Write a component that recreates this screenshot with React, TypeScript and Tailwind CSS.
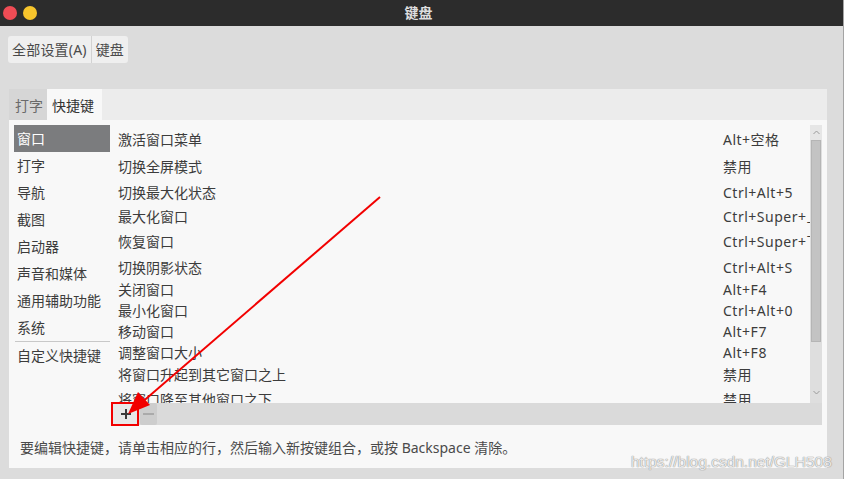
import React from "react";

const sidebar = ["窗口", "打字", "导航", "截图", "启动器", "声音和媒体", "通用辅助功能", "系统"];

const rows: [string, string, number][] = [
  ["激活窗口菜单", "Alt+空格", 28],
  ["切换全屏模式", "禁用", 27],
  ["切换最大化状态", "Ctrl+Alt+5", 24],
  ["最大化窗口", "Ctrl+Super+上", 24],
  ["恢复窗口", "Ctrl+Super+下", 27],
  ["切换阴影状态", "Ctrl+Alt+S", 24],
  ["关闭窗口", "Alt+F4", 21],
  ["最小化窗口", "Ctrl+Alt+0", 21],
  ["移动窗口", "Alt+F7", 21],
  ["调整窗口大小", "Alt+F8", 21],
  ["将窗口升起到其它窗口之上", "禁用", 23],
  ["将窗口降至其他窗口之下", "禁用", 26],
];

export default function App() {
  return (
    <div className="relative w-[844px] h-[479px] overflow-hidden bg-[#dcdcdc] border-r border-[#a4a4a4] font-['Noto_Sans','Noto_Sans_CJK_SC',sans-serif] text-[14px] text-[#3c3c3c] flex flex-col">
      {/* title bar */}
      <div className="h-[26px] bg-[#2c2c2c] grid grid-cols-[1fr_auto_1fr] items-center shrink-0">
        <div className="flex items-center gap-[6px] pl-[3px]">
          <div className="w-[14px] h-[14px] rounded-full bg-[#ef4c55]" />
          <div className="w-[14px] h-[14px] rounded-full bg-[#f7c52c]" />
        </div>
        <div className="text-[14px] font-bold text-[#dedede] leading-none pr-[6px]">键盘</div>
        <div />
      </div>

      {/* breadcrumb */}
      <div className="mt-[10px] ml-[8px] flex h-[27px] w-fit rounded-[3px] bg-[#efefef] text-[#4a4a4a]">
        <div className="px-[4px] flex items-center border-r border-[#d2d2d2] tracking-[0.2px]">全部设置(A)</div>
        <div className="px-[4px] flex items-center">键盘</div>
      </div>

      {/* panel */}
      <div className="mt-[26px] ml-[9px] w-[818px] h-[379px] flex flex-col bg-[#f8f8f8]">
        <div className="h-[31px] bg-[#ececec] flex shrink-0">
          <div className="w-[38px] bg-[#d6d6d6] text-[#6a6a6a] flex items-center pl-[6px] pt-[2px]">打字</div>
          <div className="w-[55px] bg-[#f8f8f8] text-[#333] flex items-center pl-[5px] pt-[2px]">快捷键</div>
        </div>
        <div className="flex pt-[5px] pl-[5px] pr-[5px]">
          {/* sidebar */}
          <div className="w-[96px] flex flex-col">
            {sidebar.map((s, i) => (
              <div
                key={s}
                className={
                  i === 0
                    ? "h-[27px] flex items-center pl-[3px] bg-[#7b7c7e] text-white"
                    : "h-[27px] flex items-center pl-[3px]"
                }
              >
                {s}
              </div>
            ))}
            <div className="h-px bg-[#c8c8c8] ml-[1px]" />
            <div className="h-[27px] flex items-center pl-[3px]">自定义快捷键</div>
          </div>
          {/* list */}
          <div className="ml-[2px] w-[710px] flex flex-col">
            <div className="h-[278px] flex">
              <div className="flex-1 overflow-hidden">
                {rows.map(([a, b, h]) => (
                  <div key={a} className="flex items-center pl-[6px] whitespace-nowrap" style={{ height: h }}>
                    <div className="w-[605px] shrink-0">{a}</div>
                    <div className="shrink-0 tracking-[0.5px]">{b}</div>
                  </div>
                ))}
              </div>
              <div className="w-[12px] bg-[#dedede] flex flex-col">
                <div className="h-[15px] bg-[#e6e6e6] flex items-center justify-center">
                  <svg width="7" height="5" viewBox="0 0 7 5">
                    <path d="M0.5 4L3.5 1L6.5 4" fill="none" stroke="#9a9a9a" strokeWidth="1" />
                  </svg>
                </div>
                <div className="h-[202px] mx-[1px] bg-[#c3c3c3] border border-[#b5b5b5]" />
                <div className="flex-1 flex items-end justify-center pb-[8px]">
                  <svg width="7" height="5" viewBox="0 0 7 5">
                    <path d="M0.5 1L3.5 4L6.5 1" fill="none" stroke="#9a9a9a" strokeWidth="1" />
                  </svg>
                </div>
              </div>
            </div>
            <div className="h-[22px] bg-[#dadada] flex items-stretch">
              <div className="w-[26px] ml-[1px] bg-[#e8e8e8] flex items-center justify-center">
                <svg width="12" height="12" viewBox="0 0 12 12">
                  <path d="M6 1V11M1 6H11" stroke="#3a3a3a" strokeWidth="2" />
                </svg>
              </div>
              <div className="w-[17px] ml-[1px] rounded-[2px] bg-[#cdcdcd] flex items-center justify-center">
                <svg width="11" height="2" viewBox="0 0 11 2">
                  <path d="M0 1H11" stroke="#aaaaaa" strokeWidth="2" />
                </svg>
              </div>
            </div>
          </div>
        </div>
        <div className="pl-[11px] mt-[12px] text-[#4a4a4a]">
          要编辑快捷键，请单击相应的行，然后输入新按键组合，或按 Backspace 清除。
        </div>
      </div>

      {/* red annotation box */}
      <div className="absolute left-[111px] top-[402px] w-[28px] h-[24px] border-2 border-[#f20000]" />
      {/* arrow */}
      <svg className="absolute left-0 top-0" width="844" height="479" viewBox="0 0 844 479">
        <line x1="380" y1="197" x2="140" y2="404" stroke="#f20000" strokeWidth="2" />
        <polygon points="128,414 138,392 150,405" fill="#f20000" />
      </svg>
      {/* watermark */}
      <div className="absolute left-[631px] top-[450px] text-[15.5px] font-['Liberation_Sans',sans-serif] text-white/80 [text-shadow:0_0_1px_#8a8a8a,0_0_1px_#8a8a8a]">
        https://blog.csdn.net/GLH508
      </div>
    </div>
  );
}
